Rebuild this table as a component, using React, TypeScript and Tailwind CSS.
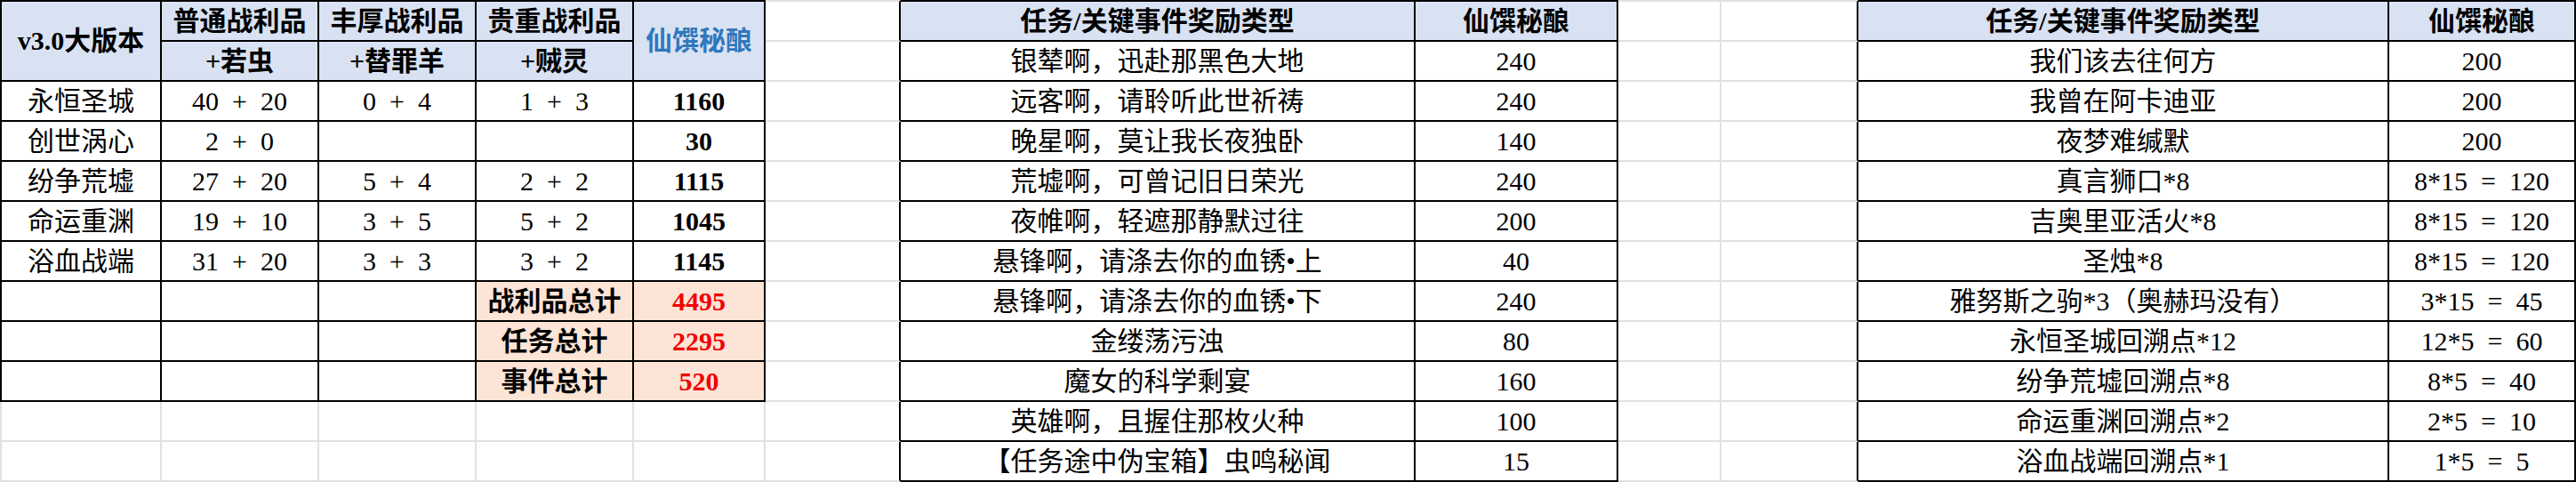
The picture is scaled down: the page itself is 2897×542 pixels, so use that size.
import React from "react";

type Cell = {
  text?: string;
  kind?: "h1" | "h1blue" | "h2" | "body" | "val" | "tot" | "totv";
  rowSpan2?: boolean;
  col: number;
  row: number;
};

const NROWS = 12;

function inTable(r: number, c: number): boolean {
  if (c >= 0 && c <= 4 && r >= 0 && r <= 9) return true;
  if ((c === 6 || c === 7) && r >= 0 && r <= 11) return true;
  if ((c === 10 || c === 11) && r >= 0 && r <= 11) return true;
  return false;
}

const t1Data: [string, string, string, string, string][] = [
  ["永恒圣城", "40  +  20", "0  +  4", "1  +  3", "1160"],
  ["创世涡心", "2  +  0", "", "", "30"],
  ["纷争荒墟", "27  +  20", "5  +  4", "2  +  2", "1115"],
  ["命运重渊", "19  +  10", "3  +  5", "5  +  2", "1045"],
  ["浴血战端", "31  +  20", "3  +  3", "3  +  2", "1145"],
];

const totals: [string, string][] = [
  ["战利品总计", "4495"],
  ["任务总计", "2295"],
  ["事件总计", "520"],
];

const t2Data: [string, string][] = [
  ["银辇啊，迅赴那黑色大地", "240"],
  ["远客啊，请聆听此世祈祷", "240"],
  ["晚星啊，莫让我长夜独卧", "140"],
  ["荒墟啊，可曾记旧日荣光", "240"],
  ["夜帷啊，轻遮那静默过往", "200"],
  ["悬锋啊，请涤去你的血锈•上", "40"],
  ["悬锋啊，请涤去你的血锈•下", "240"],
  ["金缕荡污浊", "80"],
  ["魔女的科学剩宴", "160"],
  ["英雄啊，且握住那枚火种", "100"],
  ["【任务途中伪宝箱】虫鸣秘闻", "15"],
];

const t3Data: [string, string][] = [
  ["我们该去往何方", "200"],
  ["我曾在阿卡迪亚", "200"],
  ["夜梦难缄默", "200"],
  ["真言狮口*8", "8*15  =  120"],
  ["吉奥里亚活火*8", "8*15  =  120"],
  ["圣烛*8", "8*15  =  120"],
  ["雅努斯之驹*3（奥赫玛没有）", "3*15  =  45"],
  ["永恒圣城回溯点*12", "12*5  =  60"],
  ["纷争荒墟回溯点*8", "8*5  =  40"],
  ["命运重渊回溯点*2", "2*5  =  10"],
  ["浴血战端回溯点*1", "1*5  =  5"],
];

function buildCells(): Cell[] {
  const cells: Cell[] = [];
  for (let r = 0; r < NROWS; r++) {
    for (let c = 0; c < 12; c++) {
      // skip covered cells of row spans
      if (r === 1 && (c === 0 || c === 4)) continue;
      const cell: Cell = { row: r, col: c };
      // table 1
      if (c <= 4) {
        if (r === 0) {
          if (c === 0) { cell.text = "v3.0大版本"; cell.kind = "h1"; cell.rowSpan2 = true; }
          if (c === 1) { cell.text = "普通战利品"; cell.kind = "h1"; }
          if (c === 2) { cell.text = "丰厚战利品"; cell.kind = "h1"; }
          if (c === 3) { cell.text = "贵重战利品"; cell.kind = "h1"; }
          if (c === 4) { cell.text = "仙馔秘酿"; cell.kind = "h1blue"; cell.rowSpan2 = true; }
        } else if (r === 1) {
          if (c === 1) { cell.text = "+若虫"; cell.kind = "h1"; }
          if (c === 2) { cell.text = "+替罪羊"; cell.kind = "h1"; }
          if (c === 3) { cell.text = "+贼灵"; cell.kind = "h1"; }
        } else if (r >= 2 && r <= 6) {
          cell.text = t1Data[r - 2][c];
          cell.kind = c === 4 ? "val" : "body";
        } else if (r >= 7 && r <= 9) {
          if (c === 3) { cell.text = totals[r - 7][0]; cell.kind = "tot"; }
          if (c === 4) { cell.text = totals[r - 7][1]; cell.kind = "totv"; }
        }
      }
      if (c === 6 || c === 7) {
        if (r === 0) {
          cell.text = c === 6 ? "任务/关键事件奖励类型" : "仙馔秘酿";
          cell.kind = "h2";
        } else {
          cell.text = t2Data[r - 1][c - 6];
          cell.kind = "body";
        }
      }
      if (c === 10 || c === 11) {
        if (r === 0) {
          cell.text = c === 10 ? "任务/关键事件奖励类型" : "仙馔秘酿";
          cell.kind = "h2";
        } else {
          cell.text = t3Data[r - 1][c - 10];
          cell.kind = "body";
        }
      }
      cells.push(cell);
    }
  }
  return cells;
}

function kindClass(kind?: Cell["kind"]): string {
  switch (kind) {
    case "h1":
      return "bg-[#d9e2f3] font-bold";
    case "h1blue":
      return "bg-[#d9e2f3] font-bold text-[#2f78bd]";
    case "h2":
      return "bg-[#d9e2f3] font-semibold";
    case "val":
      return "font-bold";
    case "tot":
      return "bg-[#fce4d6] font-bold";
    case "totv":
      return "bg-[#fce4d6] font-bold text-[#f00000]";
    case "body":
      return "font-normal";
    default:
      return "";
  }
}

function GridCell({ cell }: { cell: Cell }) {
  const { row: r, col: c } = cell;
  const lastRow = cell.rowSpan2 ? r + 1 : r;
  const rightBlack = inTable(r, c) || inTable(r, c + 1);
  const bottomBlack = inTable(lastRow, c) || inTable(lastRow + 1, c);
  const cls: string[] = [
    "flex items-center justify-center whitespace-pre overflow-visible",
    "border-r-2",
    rightBlack ? "border-r-black" : "border-r-[#e1e1e1]",
    "border-b-2",
    bottomBlack ? "border-b-black" : "border-b-[#e1e1e1]",
  ];
  if (r === 0) {
    cls.push("border-t-2");
    cls.push(inTable(0, c) ? "border-t-black" : "border-t-[#e1e1e1]");
  }
  if (c === 0) {
    cls.push("border-l-2");
    cls.push(inTable(r, 0) ? "border-l-black" : "border-l-[#e1e1e1]");
  }
  if (cell.rowSpan2) cls.push("row-span-2");
  cls.push(kindClass(cell.kind));
  return <div className={cls.join(" ")}>{cell.text ?? ""}</div>;
}

export default function App() {
  const cells = buildCells();
  return (
    <div className="w-[2897px] h-[542px] overflow-hidden bg-white">
      <div className="grid grid-cols-[182px_177px_177px_177px_148px_152px_579px_228px_116px_154px_597px_210px] grid-rows-[47px_repeat(11,45px)] font-['Liberation_Serif','Noto_Sans_CJK_SC',serif] text-[30px] leading-none text-black">
        {cells.map((cell) => (
          <GridCell key={`${cell.row}-${cell.col}`} cell={cell} />
        ))}
      </div>
    </div>
  );
}
